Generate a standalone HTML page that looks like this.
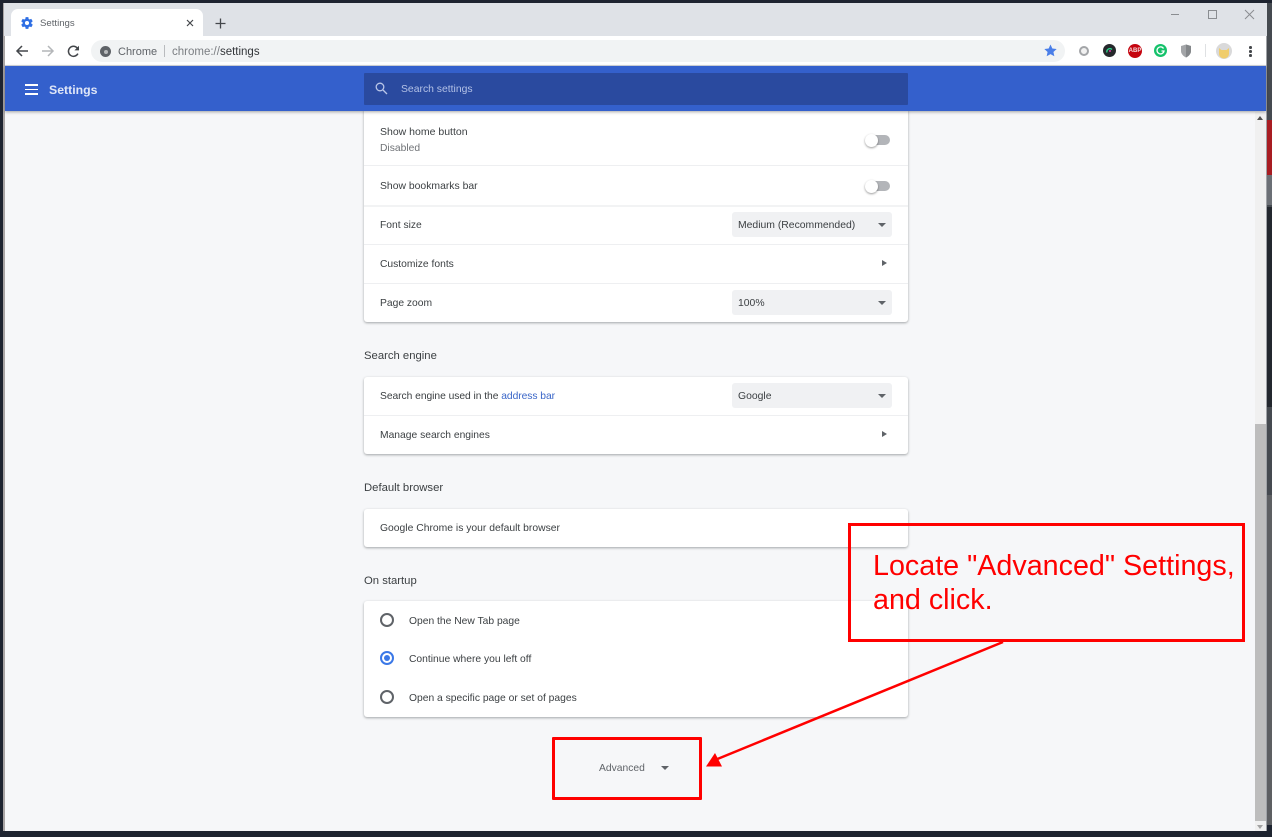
<!DOCTYPE html>
<html><head><meta charset="utf-8"><style>
*{box-sizing:border-box}
html,body{margin:0;padding:0;width:1272px;height:837px;overflow:hidden;background:#1e2430;font-family:"Liberation Sans",sans-serif}
body{filter:blur(.3px)}
.a{position:absolute}
.t{position:absolute;white-space:nowrap;font-size:10.3px;line-height:14px;color:#3c4043;margin-top:2px}
.card{position:absolute;left:364px;width:544px;background:#fff;border-radius:3px;box-shadow:0 1px 2px rgba(60,64,67,.35),0 1px 3px rgba(60,64,67,.12)}
.sep{position:absolute;left:364px;width:544px;height:1px;background:#eeeff1}
.sel{position:absolute;left:732px;width:160px;height:25px;background:#f0f1f3;border-radius:3px}
.sel span{position:absolute;left:6px;top:7px;font-size:10.4px;line-height:14px;color:#3c4043;white-space:nowrap}
.sel i{position:absolute;left:146px;top:11px;width:0;height:0;border:4.5px solid transparent;border-top:4.5px solid #5f6368;border-bottom:0}
.tr{position:absolute;left:882px;width:0;height:0;border:3.5px solid transparent;border-left:5px solid #5f6368;border-right:0}
.tg{position:absolute;left:868px;width:22px;height:10px;background:#b3b5b9;border-radius:5px}
.kn{position:absolute;width:13px;height:13px;border-radius:50%;background:#fff;box-shadow:0 1px 2px rgba(0,0,0,.4)}
.h{position:absolute;left:364px;font-size:11.3px;line-height:14px;color:#3c4043;white-space:nowrap;margin-top:1px}
.r{position:absolute;left:380px;width:14px;height:14px;border:2px solid #5f6368;border-radius:50%}
</style></head><body>

<!-- window edges -->
<div class="a" style="left:3px;top:3px;width:1264px;height:828px;background:#f6f7f9"></div>
<div class="a" style="left:3px;top:3px;width:2px;height:828px;background:#a9a5a5"></div>
<div class="a" style="left:1267px;top:0;width:5px;height:837px;background:#454a50"></div>
<div class="a" style="left:1267px;top:120px;width:5px;height:55px;background:#a81c22"></div>
<div class="a" style="left:1267px;top:175px;width:5px;height:30px;background:#6b6f75"></div>
<div class="a" style="left:1267px;top:207px;width:5px;height:200px;background:#23272e"></div>
<div class="a" style="left:1267px;top:495px;width:5px;height:330px;background:#5d5f62"></div>
<div class="a" style="left:1267px;top:825px;width:5px;height:12px;background:#1e2430"></div>
<div class="a" style="left:1266px;top:3px;width:1px;height:828px;background:#9fa2a6"></div>

<!-- tab strip -->
<div class="a" style="left:4px;top:3px;width:1263px;height:33px;background:#dfe2e7"></div>
<div class="a" style="left:11px;top:9px;width:192px;height:28px;background:#fff;border-radius:7px 7px 0 0"></div>
<svg class="a" style="left:20px;top:16px" width="14" height="14" viewBox="0 0 24 24"><path fill="#2f6fe4" d="M19.4 13c.04-.3.06-.65.06-1s-.02-.7-.07-1l2.1-1.65c.2-.15.24-.42.12-.64l-2-3.46c-.12-.22-.38-.3-.6-.22l-2.5 1c-.52-.4-1.08-.73-1.7-.98l-.37-2.65A.5.5 0 0 0 14 2h-4a.5.5 0 0 0-.5.42l-.37 2.65c-.62.25-1.18.59-1.7.98l-2.5-1c-.22-.09-.48 0-.6.22l-2 3.46c-.13.22-.07.49.12.64L4.56 11c-.04.3-.07.66-.07 1s.02.7.07 1l-2.1 1.65c-.2.15-.24.42-.12.64l2 3.46c.12.22.38.3.6.22l2.5-1c.52.4 1.08.73 1.7.98l.37 2.65c.05.24.26.42.5.42h4c.25 0 .46-.18.5-.42l.37-2.65c.62-.25 1.18-.59 1.7-.98l2.5 1c.22.09.48 0 .6-.22l2-3.46c.12-.22.07-.49-.12-.64zM12 15.5a3.5 3.500 0 1 1 0-7 3.5 3.500 0 0 1 0 7z"/></svg>
<div class="t" style="left:40px;top:15px;font-size:9.600px;color:#5f6368">Settings</div>
<svg class="a" style="left:186px;top:19px" width="8" height="8" viewBox="0 0 8 8"><path d="M1 1l6 6M7 1L1 7" stroke="#44474b" stroke-width="1.200"/></svg>
<svg class="a" style="left:215px;top:18px" width="11" height="11" viewBox="0 0 11 11"><path d="M5.500 .5v10M.5 5.500h10" stroke="#44474b" stroke-width="1.300"/></svg>
<!-- window controls -->
<div class="a" style="left:1171px;top:14px;width:8px;height:1px;background:#8a8d91"></div>
<div class="a" style="left:1208px;top:10px;width:9px;height:9px;border:1px solid #8a8d91"></div>
<svg class="a" style="left:1244px;top:9px" width="11" height="11" viewBox="0 0 11 11"><path d="M1 1l9 9M10 1l-9 9" stroke="#8a8d91" stroke-width="1"/></svg>

<!-- toolbar -->
<div class="a" style="left:5px;top:36px;width:1261px;height:30px;background:#fff"></div>
<svg class="a" style="left:15px;top:44px" width="14" height="14" viewBox="0 0 14 14"><path d="M13 7H2M7 2L2 7l5 5" fill="none" stroke="#44474b" stroke-width="1.500"/></svg>
<svg class="a" style="left:41px;top:44px" width="14" height="14" viewBox="0 0 14 14"><path d="M1 7h11M7 2l5 5-5 5" fill="none" stroke="#b4b6b9" stroke-width="1.500"/></svg>
<svg class="a" style="left:67px;top:45px" width="13" height="13" viewBox="0 0 13 13"><path d="M10.900 8.600A5 5 0 1 1 10.200 3L11.600 4.600" fill="none" stroke="#44474b" stroke-width="1.500"/><path d="M12 .8v4.600H7.400z" fill="#44474b"/></svg>
<div class="a" style="left:91px;top:40px;width:974px;height:22px;background:#f1f3f4;border-radius:11px"></div>
<div class="a" style="left:100px;top:46px;width:11px;height:11px;border-radius:50%;background:#5f6368"></div>
<div class="a" style="left:103.500px;top:49.500px;width:4px;height:4px;border-radius:50%;background:#b8babc"></div>
<div class="t" style="left:118px;top:43px;font-size:11px;color:#5f6368">Chrome</div>
<div class="a" style="left:164px;top:45px;width:1px;height:12px;background:#b9bbbe"></div>
<div class="t" style="left:172px;top:43px;font-size:11.500px;color:#7b7e82">chrome://<span style="color:#33363a">settings</span></div>
<svg class="a" style="left:1044px;top:44px" width="13" height="13" viewBox="0 0 24 24"><path fill="#4a7ee8" d="M12 1l3.400 7.400 8 .9-6 5.400 1.700 8L12 18.600 4.900 22.700l1.700-8-6-5.400 8-.9z"/></svg>
<!-- extensions -->
<div class="a" style="left:1079px;top:46px;width:10px;height:10px;border-radius:50%;border:2.500px solid #a3a5a8;background:#f1f1f1"></div>
<div class="a" style="left:1103px;top:44px;width:13px;height:13px;border-radius:50%;background:#26282c"></div>
<svg class="a" style="left:1106px;top:47px" width="7" height="6" viewBox="0 0 7 6"><path d="M1 5.500A3 3 0 0 1 6 2.500" fill="none" stroke="#2fd08a" stroke-width="1.300"/><circle cx="4" cy="4" r="1" fill="#d63aa0"/></svg>
<div class="a" style="left:1128px;top:44px;width:14px;height:14px;border-radius:50%;background:#c5050f"></div>
<div class="t" style="left:1128px;top:45px;width:14px;text-align:center;font-size:6px;line-height:9px;font-weight:bold;color:#f4dcdc">ABP</div>
<div class="a" style="left:1154px;top:44px;width:13px;height:13px;border-radius:50%;background:#15c26b"></div>
<svg class="a" style="left:1156px;top:46px" width="9" height="9" viewBox="0 0 9 9"><path d="M7.500 2.500A3.500 3.500 0 1 0 8 5H5.500" fill="none" stroke="#fff" stroke-width="1.300"/></svg>
<svg class="a" style="left:1180px;top:44px" width="12" height="14" viewBox="0 0 12 14"><path d="M6 .5L11 2v5c0 3-2.500 5.300-5 6.500C3.500 12.300 1 10 1 7V2z" fill="#a3a5a8"/><path d="M6 .5L11 2v5c0 3-2.500 5.300-5 6.500z" fill="#84878a"/></svg>
<div class="a" style="left:1205px;top:44px;width:1px;height:13px;background:#dfe1e3"></div>
<div class="a" style="left:1216px;top:43px;width:16px;height:16px;border-radius:50%;background:#d9d9da"></div>
<svg class="a" style="left:1218px;top:47px" width="12" height="12" viewBox="0 0 12 12"><path d="M1 1l2.500 2h5L11 1v6a5 4.500 0 0 1-10 0z" fill="#f0cd6c"/></svg>
<div class="a" style="left:1249px;top:46px;width:2.500px;height:2.500px;border-radius:50%;background:#44474b"></div>
<div class="a" style="left:1249px;top:50px;width:2.500px;height:2.500px;border-radius:50%;background:#44474b"></div>
<div class="a" style="left:1249px;top:54px;width:2.500px;height:2.500px;border-radius:50%;background:#44474b"></div>

<!-- scrollbar -->
<div class="a" style="left:1255px;top:112px;width:11px;height:719px;background:#f0f0f0"></div>
<div class="a" style="left:1255px;top:424px;width:11px;height:397px;background:#bdbdbd"></div>
<div class="a" style="left:1257px;top:116px;width:0;height:0;border:3.500px solid transparent;border-bottom:4px solid #505050;border-top:0"></div>
<div class="a" style="left:1257px;top:825px;width:0;height:0;border:3.500px solid transparent;border-top:4px solid #a3a3a3;border-bottom:0"></div>

<!-- cards -->
<div class="card" style="top:108px;height:214px"></div>
<div class="sep" style="top:165px"></div>
<div class="sep" style="top:205px;background:#f2f3f4;height:2px"></div>
<div class="sep" style="top:244px"></div>
<div class="sep" style="top:283px"></div>
<div class="t" style="left:380px;top:123px;font-size:10.500px">Show home button</div>
<div class="t" style="left:380px;top:140px;color:#6f7276">Disabled</div>
<div class="t" style="left:380px;top:178px;font-size:10.400px">Show bookmarks bar</div>
<div class="t" style="left:380px;top:217px">Font size</div>
<div class="t" style="left:380px;top:256px">Customize fonts</div>
<div class="t" style="left:380px;top:295px">Page zoom</div>
<div class="tg" style="top:135px"></div>
<div class="kn" style="left:865px;top:134px"></div>
<div class="tg" style="top:180.500px"></div>
<div class="kn" style="left:865px;top:179.500px"></div>
<div class="sel" style="top:212px"><span>Medium (Recommended)</span><i></i></div>
<div class="tr" style="top:260px"></div>
<div class="sel" style="top:290px"><span>100%</span><i></i></div>

<div class="h" style="top:348px">Search engine</div>
<div class="card" style="top:377px;height:77px"></div>
<div class="sep" style="top:415px"></div>
<div class="t" style="left:380px;top:388px;letter-spacing:-.05px">Search engine used in the <span style="color:#3a66c8">address bar</span></div>
<div class="sel" style="top:383px"><span>Google</span><i></i></div>
<div class="t" style="left:380px;top:427px">Manage search engines</div>
<div class="tr" style="top:431px"></div>

<div class="h" style="top:480px">Default browser</div>
<div class="card" style="top:509px;height:38px"></div>
<div class="t" style="left:380px;top:520px;font-size:10.350px">Google Chrome is your default browser</div>

<div class="h" style="top:573px">On startup</div>
<div class="card" style="top:601px;height:116px"></div>
<div class="r" style="top:613px"></div>
<div class="t" style="left:409px;top:613px">Open the New Tab page</div>
<div class="r" style="top:651px;border-color:#3b78e7"></div>
<div class="a" style="left:384px;top:655px;width:6px;height:6px;border-radius:50%;background:#3b78e7"></div>
<div class="t" style="left:409px;top:651px">Continue where you left off</div>
<div class="r" style="top:690px"></div>
<div class="t" style="left:409px;top:690px">Open a specific page or set of pages</div>

<div class="t" style="left:599px;top:760px;color:#5f6368">Advanced</div>
<div class="a" style="left:661px;top:766px;width:0;height:0;border:4px solid transparent;border-top:4px solid #5f6368;border-bottom:0"></div>

<!-- blue header -->
<div class="a" style="left:5px;top:66px;width:1261px;height:45px;background:#3460cc;box-shadow:0 1px 3px rgba(0,0,0,.35)"></div>
<div class="a" style="left:5px;top:65px;width:1261px;height:1px;background:#c9ccd1"></div>
<div class="a" style="left:25px;top:84px;width:13px;height:1.500px;background:#fff"></div>
<div class="a" style="left:25px;top:88.500px;width:13px;height:1.500px;background:#fff"></div>
<div class="a" style="left:25px;top:93px;width:13px;height:1.500px;background:#fff"></div>
<div class="t" style="left:49px;top:80px;font-size:12.300px;font-weight:bold;line-height:16px;color:#dfe6f7">Settings</div>
<div class="a" style="left:364px;top:73px;width:544px;height:32px;background:#2a4a9f;border-radius:1px"></div>
<svg class="a" style="left:375px;top:82px" width="13" height="13" viewBox="0 0 13 13"><circle cx="5" cy="5" r="3.800" fill="none" stroke="#b9c6e8" stroke-width="1.300"/><path d="M8 8l4 4" stroke="#b9c6e8" stroke-width="1.300"/></svg>
<div class="t" style="left:401px;top:81px;font-size:10.400px;color:#b3c1e6">Search settings</div>

<!-- annotations -->
<div class="a" style="left:848px;top:523px;width:397px;height:119px;border:3px solid #f00"></div>
<div class="a" style="left:552px;top:737px;width:150px;height:63px;border:3px solid #f00;border-radius:1px"></div>
<div class="t" style="left:873px;top:547px;font-size:28.700px;line-height:34px;color:#f00">Locate "Advanced" Settings,<br>and click.</div>
<svg class="a" style="left:690px;top:630px" width="330" height="150" viewBox="0 0 330 150"><path d="M313 12L25 130" stroke="#f00" stroke-width="2.500" fill="none"/><path d="M16 136.500L32 136.500 25 123z" fill="#f00"/></svg>
<div class="a" style="left:0;top:0;width:1272px;height:3px;background:#1e2430"></div>
<div class="a" style="left:0;top:831px;width:1272px;height:6px;background:#1e2430"></div>
<div class="a" style="left:0;top:0;width:3px;height:837px;background:#1e2430"></div>
</body></html>
